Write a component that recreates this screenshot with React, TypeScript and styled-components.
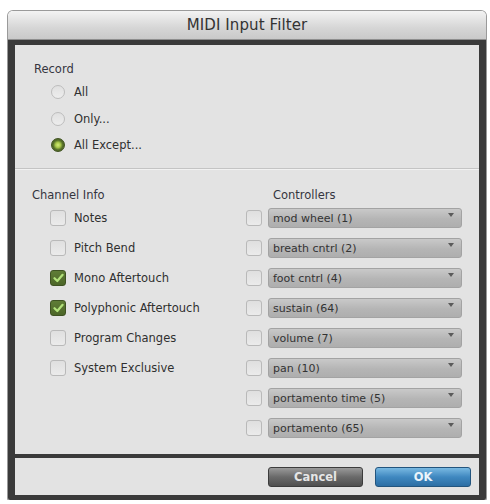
import styled, { createGlobalStyle } from "styled-components";

const GlobalStyle = createGlobalStyle`
  body {
    margin: 0;
    background: #ffffff;
    font-family: "DejaVu Sans", "Liberation Sans", sans-serif;
    color: #333333;
  }
`;

const Window = styled.div`
  width: 478px;
  margin: 11px 0 0 8px;
  border-radius: 5px 5px 2px 2px;
  overflow: hidden;
  box-shadow: 0 0 0 1px #9a9a9a;
`;

const TitleBar = styled.div`
  height: 29px;
  display: flex;
  align-items: center;
  justify-content: center;
  background: linear-gradient(to bottom, #f3f3f3, #d6d6d6 60%, #c9c9c9);
  border-bottom: 1px solid #8e8e8e;
  box-sizing: border-box;
  font-size: 15px;
  color: #333333;
  letter-spacing: 0.1px;
`;

const Frame = styled.div`
  background: #3a3a3a;
  padding: 5px 7px 5px 7px;
  display: flex;
  flex-direction: column;
  gap: 4px;
`;

const Panel = styled.div`
  background: #e3e3e3;
  height: 409px;
  display: flex;
  flex-direction: column;
`;

const RecordSection = styled.div`
  height: 123px;
  box-sizing: border-box;
  padding: 17px 0 0 19px;
`;

const Heading = styled.div<{ $indent?: number }>`
  font-size: 11.5px;
  line-height: 14px;
  color: #35353f;
  padding-left: ${(p) => p.$indent ?? 0}px;
`;

const RadioList = styled.div`
  margin: 8px 0 0 18px;
  display: flex;
  flex-direction: column;
  gap: 10.5px;
`;

const OptionRow = styled.label<{ $gap: number }>`
  height: 16px;
  display: flex;
  align-items: center;
  gap: ${(p) => p.$gap}px;
  font-size: 11.5px;
  color: #303030;
`;

const Radio = styled.span<{ $on?: boolean }>`
  width: 14px;
  height: 14px;
  margin-left: -1px;
  border-radius: 50%;
  box-sizing: border-box;
  border: 1px solid ${(p) => (p.$on ? "#3f5220" : "#bdbdbd")};
  background: ${(p) =>
    p.$on
      ? "radial-gradient(circle, #d4ec7a 0, #a9c94a 2.5px, #56702a 4.8px, #485e22 100%)"
      : "linear-gradient(to bottom, #e0e0e0, #ededed)"};
`;

const Divider = styled.div`
  height: 2px;
  border-top: 1px solid #c4c4c4;
  background: #f2f2f2;
  box-sizing: border-box;
`;

const ChannelSection = styled.div`
  flex: 1;
  display: grid;
  grid-template-columns: 231px 1fr;
  padding: 18px 17px 0 0;
`;

const Column = styled.div<{ $pad: number }>`
  padding-left: ${(p) => p.$pad}px;
`;

const RowList = styled.div<{ $indent: number }>`
  margin: 6px 0 0 ${(p) => p.$indent}px;
  display: flex;
  flex-direction: column;
  gap: 10px;
`;

const CheckRow = styled(OptionRow)`
  height: 20px;
`;

const Check = styled.span<{ $on?: boolean }>`
  flex: none;
  width: 16px;
  height: 16px;
  border-radius: 3px;
  box-sizing: border-box;
  border: 1px solid ${(p) => (p.$on ? "#3e5222" : "#b9b9b9")};
  background: ${(p) =>
    p.$on
      ? "linear-gradient(to bottom, #5f7d36, #4c6628)"
      : "linear-gradient(to bottom, #dfdfdf, #ebebeb)"};
  display: flex;
  align-items: center;
  justify-content: center;
`;

const Select = styled.div`
  flex: 1;
  height: 20px;
  box-sizing: border-box;
  border-radius: 3px;
  border: 1px solid #a3a3a3;
  background: linear-gradient(to bottom, #c9c9c9, #b5b5b5 55%, #aeaeae);
  display: flex;
  align-items: center;
  justify-content: space-between;
  padding: 0 7px 0 4px;
  font-size: 11px;
  color: #333333;
`;

const Arrow = styled.span`
  width: 0;
  height: 0;
  margin-top: -7px;
  border-left: 3.5px solid transparent;
  border-right: 3.5px solid transparent;
  border-top: 4px solid #5a5a5a;
`;

const ButtonBar = styled.div`
  height: 37px;
  background: #e3e3e3;
  display: flex;
  align-items: center;
  justify-content: flex-end;
  gap: 12px;
  padding-right: 8px;
`;

const Button = styled.button<{ $primary?: boolean }>`
  width: ${(p) => (p.$primary ? 96 : 95)}px;
  height: 20px;
  border-radius: 3px;
  border: 1px solid ${(p) => (p.$primary ? "#23557e" : "#3c3c3c")};
  background: ${(p) =>
    p.$primary
      ? "linear-gradient(to bottom, #79b9e2, #3f88c0 50%, #2c6ea4)"
      : "linear-gradient(to bottom, #9a9a9a, #6a6a6a 50%, #4f4f4f)"};
  color: ${(p) => (p.$primary ? "#eaf4fb" : "#e6e6e6")};
  font-family: "DejaVu Sans", sans-serif;
  font-weight: bold;
  font-size: 11.5px;
  padding: 0;
`;

const CheckMark = () => (
  <svg width="11" height="10" viewBox="0 0 11 10">
    <path
      d="M1.5 5.2 L4.3 8 L9.6 1.8"
      fill="none"
      stroke="#b2e27a"
      strokeWidth="2.2"
      strokeLinecap="round"
      strokeLinejoin="round"
    />
  </svg>
);

const channelInfo = [
  { label: "Notes", on: false },
  { label: "Pitch Bend", on: false },
  { label: "Mono Aftertouch", on: true },
  { label: "Polyphonic Aftertouch", on: true },
  { label: "Program Changes", on: false },
  { label: "System Exclusive", on: false },
];

const controllers = [
  "mod wheel (1)",
  "breath cntrl (2)",
  "foot cntrl (4)",
  "sustain (64)",
  "volume (7)",
  "pan (10)",
  "portamento time (5)",
  "portamento (65)",
];

const recordOptions = ["All", "Only...", "All Except..."];

export default function App() {
  return (
    <>
      <GlobalStyle />
      <Window>
        <TitleBar>MIDI Input Filter</TitleBar>
        <Frame>
          <Panel>
            <RecordSection>
              <Heading>Record</Heading>
              <RadioList>
                {recordOptions.map((o, i) => (
                  <OptionRow key={o} $gap={9}>
                    <Radio $on={i === 2} />
                    {o}
                  </OptionRow>
                ))}
              </RadioList>
            </RecordSection>
            <Divider />
            <ChannelSection>
              <Column $pad={17}>
                <Heading>Channel Info</Heading>
                <RowList $indent={18}>
                  {channelInfo.map((c) => (
                    <CheckRow key={c.label} $gap={8}>
                      <Check $on={c.on}>{c.on && <CheckMark />}</Check>
                      {c.label}
                    </CheckRow>
                  ))}
                </RowList>
              </Column>
              <Column $pad={0}>
                <Heading $indent={27}>Controllers</Heading>
                <RowList $indent={0}>
                  {controllers.map((c) => (
                    <CheckRow key={c} $gap={6}>
                      <Check />
                      <Select>
                        {c}
                        <Arrow />
                      </Select>
                    </CheckRow>
                  ))}
                </RowList>
              </Column>
            </ChannelSection>
          </Panel>
          <ButtonBar>
            <Button>Cancel</Button>
            <Button $primary>OK</Button>
          </ButtonBar>
        </Frame>
      </Window>
    </>
  );
}
